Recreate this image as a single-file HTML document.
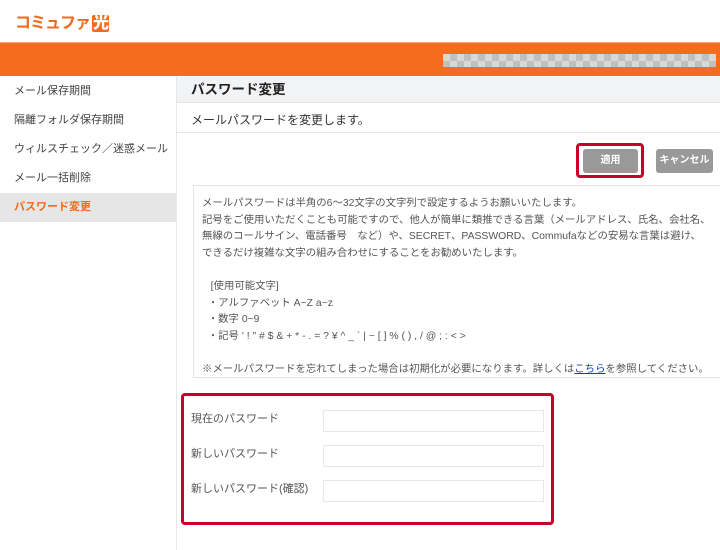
<!DOCTYPE html>
<html><head><meta charset="utf-8"><style>
*{margin:0;padding:0;box-sizing:border-box}
body{width:720px;height:550px;overflow:hidden;background:#fff;font-family:"Liberation Sans","Noto Sans CJK JP",sans-serif;color:#444;position:relative}
.a{position:absolute;white-space:nowrap}
.logo{left:15px;top:9px;font-size:16px;font-weight:bold;color:#f26b1d;letter-spacing:-1px}
.logo b{background:#f26b1d;color:#fff;padding:0 1px;border-radius:2px;margin-left:2px}
.bar{left:0;top:42px;width:720px;height:34px;background:#f56b1f;border-top:1px solid #f9a36f}
.chk{left:443px;top:11px;width:273px;height:13px;background-color:#d8d8d8;background-image:linear-gradient(45deg,#c0c0c0 25%,transparent 25%,transparent 75%,#c0c0c0 75%),linear-gradient(45deg,#c0c0c0 25%,transparent 25%,transparent 75%,#c0c0c0 75%);background-size:14px 14px;background-position:0 0,7px 7px}
.side{left:0;top:76px;width:177px;height:474px;border-right:1px solid #e6e6e6}
.si{left:0;width:176px;height:29px;font-size:11px;color:#444;padding-left:14px;line-height:29px}
.title{left:177px;top:77px;width:543px;height:26px;background:#f2f3f5;border-bottom:1px solid #e4e4e4;font-size:13.5px;font-weight:bold;color:#222;padding-left:14px;line-height:26px}
.note{left:193px;top:185px;width:530px;height:193px;border:1px solid #e4e4e4;font-size:10.4px;color:#555;padding:10px 0 0 8px;line-height:16.6px}
.btn{background:#999;color:#fff;font-size:10px;font-weight:bold;text-align:center;border-radius:3px;line-height:24px;height:24px}
.red{border:3px solid #c8002a;border-radius:4px}
.lbl{font-size:11px;color:#555;left:191px}
.in{left:323px;width:221px;height:22px;border:1px solid #e8e8e8}
</style></head><body>
<div class="a logo">コミュファ<b>光</b></div>
<div class="a bar"><div class="a chk"></div></div>
<div class="a side"></div>
<div class="a si" style="top:77px">メール保存期間</div>
<div class="a si" style="top:106px">隔離フォルダ保存期間</div>
<div class="a si" style="top:135px">ウィルスチェック／迷惑メール</div>
<div class="a si" style="top:164px">メール一括削除</div>
<div class="a si" style="top:193px;background:#e6e6e6;color:#f26b1d;font-weight:bold">パスワード変更</div>
<div class="a title">パスワード変更</div>
<div class="a" style="left:191px;top:111px;font-size:12px;color:#333">メールパスワードを変更します。</div>
<div class="a" style="left:177px;top:132px;width:543px;border-top:1px solid #e8e8e8"></div>
<div class="a red" style="left:576px;top:143px;width:68px;height:35px"></div>
<div class="a btn" style="left:583px;top:149px;width:55px">適用</div>
<div class="a btn" style="left:656px;top:149px;width:57px">キャンセル</div>
<div class="a note">メールパスワードは半角の6～32文字の文字列で設定するようお願いいたします。<br>記号をご使用いただくことも可能ですので、他人が簡単に類推できる言葉（メールアドレス、氏名、会社名、<br>無線のコールサイン、電話番号　など）や、SECRET、PASSWORD、Commufaなどの安易な言葉は避け、<br>できるだけ複雑な文字の組み合わせにすることをお勧めいたします。<br><br>&nbsp;&nbsp;&nbsp;[使用可能文字]<br>&nbsp;&nbsp;・アルファベット A~Z a~z<br>&nbsp;&nbsp;・数字 0~9<br>&nbsp;&nbsp;・記号 ' ! " # $ &amp; + * - . = ? ¥ ^ _ ` | ~ [ ] % ( ) , / @ ; : &lt; &gt;<br><br>※メールパスワードを忘れてしまった場合は初期化が必要になります。詳しくは<span style="color:#1a3fb0;text-decoration:underline">こちら</span>を参照してください。</div>
<div class="a red" style="left:181px;top:393px;width:373px;height:132px"></div>
<div class="a lbl" style="top:410px">現在のパスワード</div>
<div class="a lbl" style="top:445px">新しいパスワード</div>
<div class="a lbl" style="top:480px">新しいパスワード(確認)</div>
<div class="a in" style="top:410px"></div>
<div class="a in" style="top:445px"></div>
<div class="a in" style="top:480px"></div>
</body></html>
